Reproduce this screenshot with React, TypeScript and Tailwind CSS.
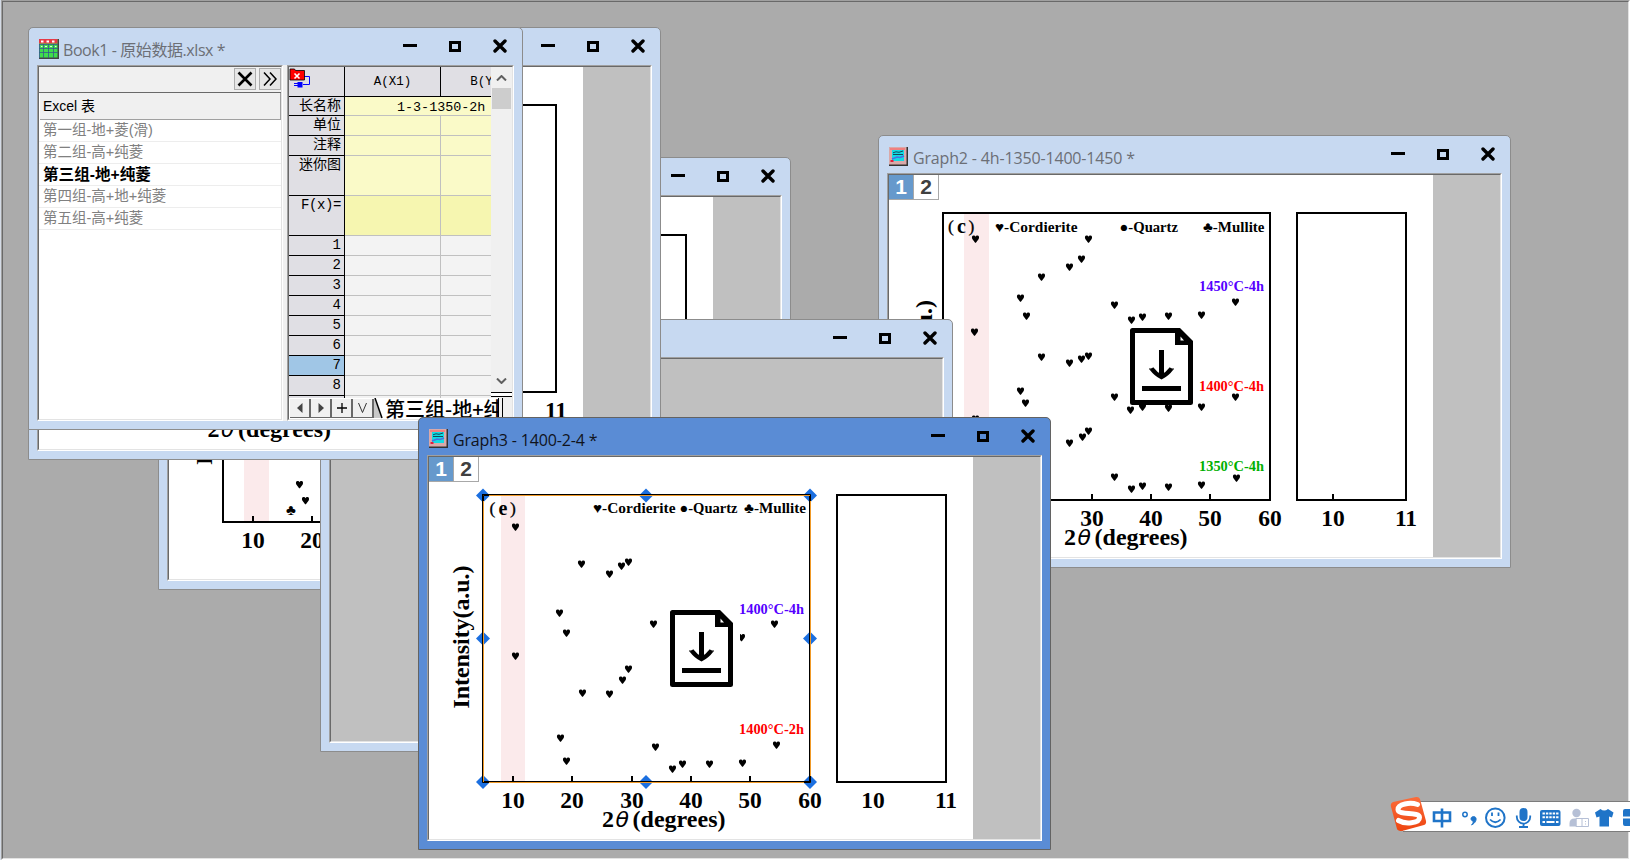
import React from "react";

type Point = [number, number];

type Label = {
  text: string;
  x: number;
  y: number;
  w: number;
  fill?: string;
};

const serif = '"Liberation Serif", "Noto Sans CJK SC", serif';

const sheets = [
  "第一组-地+菱(滑)",
  "第二组-高+纯菱",
  "第三组-地+纯菱",
  "第四组-高+地+纯菱",
  "第五组-高+纯菱",
];

const graph2Hearts: Point[] = [
  [86.5, 63.5], [199.5, 63.5], [192.5, 83.5], [180.5, 91.5], [152.5, 101.5],
  [131.5, 122.5], [137.5, 140.5], [225.5, 129.5], [242.5, 144.5], [253.5, 141.5],
  [279.5, 140.5], [312.5, 139.5], [346.5, 126.5], [85.5, 156.5], [152.5, 181.5],
  [180.5, 187.5], [192.5, 183.5], [199.5, 180.5], [131.5, 215.5], [136.5, 227.5],
  [86.5, 243.5], [225.5, 221.5], [241.5, 234.5], [253.5, 231.5], [279.5, 232.5],
  [312.5, 231.5], [346.5, 221.5], [180.5, 267.5], [193.5, 261.5], [199.5, 255.5],
  [225.5, 301.5], [242.5, 313.5], [253.5, 310.5], [279.5, 311.5], [312.5, 309.5],
  [347.5, 302.5],
];

const graph3Hearts: Point[] = [
  [86.5, 69.5], [152.5, 106.5], [180.5, 116.5], [192.5, 108.5], [199.5, 104.5],
  [130.5, 155.5], [137.5, 175.5], [224.5, 166.5], [345.5, 166.5], [312.5, 180],
  [86.5, 198.5], [199.5, 211.5], [193.5, 222.5], [153.5, 235.5], [180.5, 236.5],
  [131.5, 280.5], [137.5, 303.5], [226.5, 289.5], [243.5, 311.5], [253.5, 306.5],
  [280.5, 306.5], [313.5, 305.5], [347.5, 287.5],
];

const graph5Hearts: Point[] = [
  [130.5, 287], [136.5, 303],
];

const GraphIcon = () => (
  <svg width="19" height="19" viewBox="0 0 19 19">
    <rect width="19" height="19" fill="#333" />
    <rect x="0" y="0" width="17.5" height="17.5" fill="#d9a9a9" />
    <rect x="1" y="1" width="15" height="2" fill="#f08080" />
    <rect x="3" y="3" width="12" height="11" fill="#10dce4" />
    <path d="M4 5.800L7 4.800l3 .5 4-1.300M4 7.500h10" stroke="#14485a" fill="none" />
    <path d="M3 12l5-2 3 .5 4-1.500" stroke="#4a6fe0" strokeWidth="1.500" fill="none" />
    <path d="M1.500 14h3" stroke="#e02040" strokeWidth="2" />
  </svg>
);

const BookIcon = () => (
  <svg width="20" height="20" viewBox="0 0 20 20">
    <rect width="20" height="20" fill="#444" />
    <rect width="18.500" height="18.500" fill="#3fdc4c" />
    <rect width="18.500" height="4.500" fill="#e63946" />
    <path d="M2 2.500h2.500M7.500 2.500h2.500M13 2.500h2.500" stroke="#fff" strokeWidth="2" />
    <path
      d="M0 5.500h19M0 9.500h19M0 13.500h19M.5 5v14M4.500 5v14M9.500 5v14M14.500 5v14"
      stroke="#35588f"
      strokeWidth=".8"
    />
    <path d="M2 7.500h1.500M6 7.500h2M11 7.500h2M16 7.500h1.500" stroke="#d7ffe0" />
  </svg>
);

type WinProps = {
  className: string;
  title?: string;
  titleClass?: string;
  icon?: React.ReactNode;
  active?: boolean;
  children?: React.ReactNode;
};

const Win = ({ className, title, titleClass = "tracking-[-0.16px]", icon, active, children }: WinProps) => (
  <div
    className={`absolute flex flex-col overflow-hidden rounded-t-[5px] border px-2 pb-2 ${
      active ? "border-[#636363] bg-[#5a8cd5]" : "border-[#8c8c8c] bg-[#c7d9f1]"
    } ${className}`}
  >
    {/* Title bar */}
    <div className="flex h-[37px] shrink-0 items-start pr-[7px] pl-[2px]">
      <div className="mt-[11px] w-[24px]">{icon}</div>
      <div
        className={`mt-[10px] flex-1 whitespace-nowrap font-['Open_Sans','Noto_Sans_CJK_SC',sans-serif] text-[16px] leading-6 ${titleClass} ${
          active ? "text-[#10131c]" : "text-[#6c6f76]"
        }`}
      >
        {title}
      </div>
      <div className="mt-[11px] flex h-[14px] items-start gap-8">
        <div className="mt-[5px] h-[3px] w-[14px] bg-black"></div>
        <div className="mt-[2px] h-[11px] w-3 border-3 border-black"></div>
        <svg className="h-[14px] w-[14px]" viewBox="0 0 14 14">
          <path d="M2 2L12 12M12 2L2 12" stroke="#000" strokeWidth="3.400" strokeLinecap="round" />
        </svg>
      </div>
    </div>
    {children}
  </div>
);

// Two pixel sunken edge used round every window's client area
const Sunken = ({ className, children }: { className?: string; children?: React.ReactNode }) => (
  <div className="flex min-h-0 flex-1 border border-t-[#a0a0a0] border-r-white border-b-white border-l-[#a0a0a0]">
    <div
      className={`relative flex min-w-0 flex-1 overflow-hidden border border-t-[#696969] border-r-[#e3e3e3] border-b-[#e3e3e3] border-l-[#696969] ${className}`}
    >
      {children}
    </div>
  </div>
);

const LayerTabs = () => (
  <div className="absolute top-0 left-0 flex font-['Liberation_Sans',sans-serif] text-[21px] leading-[23px] font-bold">
    <div className="h-[25px] w-6 border-b border-[#a8a8a8] bg-[#6699cc] text-center text-white">1</div>
    <div className="h-[25px] w-[26px] border-r border-b border-l border-[#a8a8a8] bg-white text-center text-[#404040]">
      2
    </div>
  </div>
);

const Heart = ({ x, y }: { x: number; y: number }) => (
  <path
    transform={`translate(${x} ${y + 0.5})`}
    d="M-.4 3.800L-3.200 0C-4 -1.600 -3.400 -3.400 -2 -3.400C-1 -3.400 -.3 -2.900 0 -2.200C.3 -2.900 1 -3.400 2 -3.400C3.400 -3.400 4 -1.600 3.200 0L.4 3.800Z"
  />
);

const Download = () => (
  <g transform="translate(241 153)">
    <path d="M2.500 2.500H48L60.500 15V74.500H2.500Z" fill="#fff" stroke="#000" strokeWidth="5" strokeLinejoin="round" />
    <path d="M45 0h5l13 13v4H45z" />
    <path d="M50.500 8.500v4h3.500z" fill="#fff" />
    <path d="M29 22h5v26h-5z" />
    <path d="M21.500 40.500Q26 46.500 31.500 49Q37 46.500 41.500 40.500" fill="none" stroke="#000" strokeWidth="4.400" />
    <path d="M19 41h5M39 41h5" stroke="#000" strokeWidth="1.200" />
    <path d="M12 58h39v5H12z" />
  </g>
);

type PlotProps = {
  pink?: number;
  hearts?: Point[];
  legend?: Label[];
  labels?: Label[];
  tag?: { letter: string; x: number; y: number };
  axisX?: number;
  yAxis?: Point;
  rightTick?: boolean;
  download?: boolean;
  selected?: boolean;
  club?: boolean;
};

const ticks: Point[] = [
  [84, 10],
  [143, 20],
  [203, 30],
  [262, 40],
  [321, 50],
  [381, 60],
];

const Plot = (props: PlotProps) => {
  const { pink, hearts = [], legend = [], labels = [], tag, axisX, yAxis } = props;
  return (
    <svg className="h-[382px] w-[544px] shrink-0 bg-white" viewBox="0 0 544 382" fontFamily={serif} fontWeight="bold">
      {pink && <rect x={pink} y="39" width={props.selected ? 24 : 25} height="286" fill="#fbeaeb" />}
      <rect x="54" y="38" width="327" height="287" fill="none" stroke="#000" strokeWidth="2" />
      <rect x="408" y="38" width="109" height="287" fill="none" stroke="#000" strokeWidth="2" />

      {ticks.map(([x, value]) => (
        <g key={value}>
          {value < 60 && <rect x={x - 1} y="319" width="2" height="6" />}
          <text x={x} y="351" fontSize="23.500" textAnchor="middle">
            {value}
          </text>
        </g>
      ))}
      {props.rightTick && <rect x="443" y="319" width="2" height="6" />}
      <text x="444" y="351" fontSize="23.500" textAnchor="middle">10</text>
      <text x="517" y="351" fontSize="23.500" textAnchor="middle">11</text>

      {/* Axis titles */}
      {axisX && (
        <g fontSize="24">
          <text x={axisX} y="369.500">2</text>
          <text x={axisX + 13.500} y="369.500" fontFamily="DejaVu Sans, sans-serif" fontStyle="italic" fontWeight="normal" fontSize="22">
            θ
          </text>
          <text x={axisX + 30.500} y="369.500" textLength="93">(degrees)</text>
        </g>
      )}
      {yAxis && (
        <text transform={`translate(${yAxis[0]} ${yAxis[1]}) rotate(-90)`} fontSize="24" textLength="143">
          Intensity(a.u.)
        </text>
      )}

      {hearts.map(([x, y], i) => (
        <Heart key={i} x={x} y={y} />
      ))}
      {props.club && <text x="117" y="318" fontSize="15">♣</text>}

      {tag && (
        <g>
          <text x={tag.x} y={tag.y} fontSize="17.500" fontWeight="normal" stroke="#000" strokeWidth=".3">(</text>
          <text x={tag.x + 9} y={tag.y + 1} fontSize="20">{tag.letter}</text>
          <text x={tag.x + 20.500} y={tag.y} fontSize="17.500" fontWeight="normal" stroke="#000" strokeWidth=".3">)</text>
        </g>
      )}
      {legend.concat(labels).map((l) => (
        <text key={l.text} x={l.x} y={l.y} fontSize="14.500" textLength={l.w} lengthAdjust="spacingAndGlyphs" fill={l.fill}>
          {l.text}
        </text>
      ))}

      {props.download && (
        <g>
          <rect x="303" y="170" width="8" height="20" fill="#fff" />
          <Download />
        </g>
      )}

      {/* Selection frame with its eight grips */}
      {props.selected && (
        <g>
          {[38.5, 181.5, 325].map((y) =>
            [54, 217, 381].map((x) =>
              x === 217 && y === 181.5 ? null : (
                <path key={`${x}-${y}`} d={`M${x - 7} ${y}l7-7 7 7-7 7z`} fill="#1b6fe0" />
              )
            )
          )}
          <rect x="53.5" y="37.5" width="327" height="287" fill="none" stroke="#000" />
          <rect x="54.5" y="38.5" width="327" height="287" fill="none" stroke="#f09a28" />
          <path d="M54.500 44V38.500H60M375 37.500H381.500V44M53.500 319V325.500H60M375 325.500H381.500V319" fill="none" stroke="#000" />
        </g>
      )}
    </svg>
  );
};

const gridRows = [
  { name: "长名称", row: "h-[19px]", cell: "bg-[#fafac8]" },
  { name: "单位", row: "h-5", cell: "bg-[#fafac8]" },
  { name: "注释", row: "h-5", cell: "bg-[#fafac8]" },
  { name: "迷你图", row: "h-10", cell: "bg-[#fafac8]" },
  { name: "F(x)=", row: "h-10", cell: "bg-[#f6f6b0]" },
  { name: "1", row: "h-5", cell: "bg-[#f3f3f3]" },
  { name: "2", row: "h-5", cell: "bg-[#f3f3f3]" },
  { name: "3", row: "h-5", cell: "bg-[#f3f3f3]" },
  { name: "4", row: "h-5", cell: "bg-[#f3f3f3]" },
  { name: "5", row: "h-5", cell: "bg-[#f3f3f3]" },
  { name: "6", row: "h-5", cell: "bg-[#f3f3f3]" },
  { name: "7", row: "h-5", cell: "bg-[#f3f3f3]" },
  { name: "8", row: "h-5", cell: "bg-[#f3f3f3]" },
  { name: "", row: "h-5", cell: "bg-[#f3f3f3]" },
];

const SheetList = () => (
  <div className="flex w-[246px] shrink-0">
    <Sunken className="flex-col bg-white">
      <div className="flex h-[26px] shrink-0 items-start justify-end gap-[3px] border-b border-[#696969] bg-[#f0f0f0] pt-px">
        <div className="flex size-[22px] items-center justify-center border border-[#adadad] bg-[#e6e6e6]">
          <svg width="16" height="16" viewBox="0 0 16 16">
            <path d="M1.500 1.500L14.500 14.500M14.500 1.500L1.500 14.500" stroke="#000" strokeWidth="2.600" />
          </svg>
        </div>
        <div className="flex size-[22px] items-center justify-center border border-[#adadad] bg-[#e6e6e6]">
          <svg width="14" height="14" viewBox="0 0 14 14">
            <path d="M1 .5L7 7L1 13.500M7 .5L13 7L7 13.500" fill="none" stroke="#000" strokeWidth="1.500" />
          </svg>
        </div>
      </div>
      <div className="ml-px flex h-[27px] shrink-0 items-center border-r border-b border-[#a0a0a0] bg-[#f0f0f0] pl-[3px] font-['Liberation_Sans','Noto_Sans_CJK_SC',sans-serif] text-[14px] text-black">
        Excel 表
      </div>
      {sheets.map((sheet, i) => (
        <div
          key={sheet}
          className={`h-[22px] shrink-0 border-b border-[#ededed] pl-1 font-['Liberation_Sans','Noto_Sans_CJK_SC',sans-serif] leading-[21px] whitespace-nowrap ${
            i === 2 ? "text-[15.6px] font-bold text-black" : "text-[14.5px] text-[#808080]"
          }`}
        >
          {sheet}
        </div>
      ))}
    </Sunken>
  </div>
);

const TabButton = ({ children }: { children: React.ReactNode }) => (
  <div className="flex h-[19px] w-[21px] items-center justify-center border-r-2 border-b border-[#696969] bg-[#f0f0f0]">
    {children}
  </div>
);

const Worksheet = () => (
  <div className="flex min-w-0 flex-1">
    <Sunken className="flex-col bg-[#f0f0f0]">
      <div className="flex h-[331px] shrink-0 overflow-hidden">
        <div className="w-[202px] shrink-0 overflow-hidden font-['Liberation_Mono','Noto_Sans_CJK_SC',monospace] text-black">
          {/* Column headings */}
          <div className="flex h-[30px] w-[260px] border-b border-black bg-[#e0dfe4] text-[12.5px] leading-[31px]">
            <div className="w-[56px] shrink-0 border-r border-black">
              <svg width="22" height="22" viewBox="0 0 22 22">
                <path d="M15 9.500h5.500v8H14" stroke="#00f" fill="none" />
                <path d="M5 16.500h4M5 18.500h4" stroke="#00f" fill="none" />
                <path d="M8.500 15h5v5.500h-5z" fill="#00f" />
                <path d="M1 2h4.500l1 1.500h9V13H1z" fill="#f00" stroke="#000" strokeWidth=".8" />
                <path d="M5.500 6.500l5 5M10.500 6.500l-5 5" stroke="#fff" strokeWidth="1.600" />
              </svg>
            </div>
            <div className="w-[96px] shrink-0 border-r border-black text-center">A(X1)</div>
            <div className="w-[96px] shrink-0 text-center">B(Y1)</div>
          </div>
          {gridRows.map((r) => (
            <div key={r.name} className={`flex w-[260px] ${r.row}`}>
              <div
                className={`w-[56px] shrink-0 border-r border-b border-black pr-[3px] text-right text-[14px] leading-[18px] ${
                  r.name === "7" ? "bg-[#a0c6e6]" : "bg-[#e0dfe4]"
                }`}
              >
                <span className={r.name === "F(x)=" ? "tracking-[-0.4px]" : ""}>{r.name}</span>
              </div>
              {r.name === "长名称" ? (
                <div className={`w-[192px] shrink-0 border-b border-[#c0c0c0] pl-[52px] text-[13.4px] leading-[21px] ${r.cell}`}>
                  1-3-1350-2h
                </div>
              ) : (
                <>
                  <div className={`w-[96px] shrink-0 border-r border-b border-[#c0c0c0] ${r.cell}`}></div>
                  <div className={`w-[96px] shrink-0 border-b border-[#c0c0c0] ${r.cell}`}></div>
                </>
              )}
            </div>
          ))}
        </div>
        {/* Scroll bar */}
        <div className="flex flex-1 flex-col bg-[#f0f0f0]">
          <div className="flex h-[326px] flex-col items-center border-b border-black">
            <svg className="mt-[8px] mb-[7px]" width="11" height="6" viewBox="0 0 11 6">
              <path d="M1 5.500L5.500 1L10 5.500" fill="none" stroke="#606060" strokeWidth="2" />
            </svg>
            <div className="h-[21px] w-[19px] bg-[#cdcdcd]"></div>
            <div className="flex-1"></div>
            <svg className="mb-[8px]" width="11" height="6" viewBox="0 0 11 6">
              <path d="M1 .5L5.500 5L10 .5" fill="none" stroke="#606060" strokeWidth="2" />
            </svg>
          </div>
          <div className="h-1 border-b border-black bg-white"></div>
        </div>
      </div>
      {/* Sheet tabs */}
      <div className="flex h-[21px] shrink-0 bg-white">
        <div className="flex shrink-0 items-end bg-white pb-px pl-px">
          <TabButton>
            <svg width="6" height="10" viewBox="0 0 6 10"><path d="M5.500 0v10L0 5z" fill="#444" /></svg>
          </TabButton>
          <TabButton>
            <svg width="6" height="10" viewBox="0 0 6 10"><path d="M.5 0v10L6 5z" fill="#444" /></svg>
          </TabButton>
          <TabButton>
            <svg width="10" height="10" viewBox="0 0 10 10"><path d="M5 0v10M0 5h10" stroke="#000" strokeWidth="1.300" /></svg>
          </TabButton>
          <TabButton>
            <svg width="9" height="10" viewBox="0 0 9 10"><path d="M.5 0L4.500 9.500L8.500 0" fill="none" stroke="#333" /></svg>
          </TabButton>
        </div>
        <svg className="shrink-0" width="9" height="21" viewBox="0 0 9 21">
          <path d="M0 0L8 20H0z" fill="#c8c8c8" />
          <path d="M1 0L8 20" stroke="#000" strokeWidth="1.500" />
        </svg>
        <div className="w-[116px] shrink-0 overflow-hidden border-r border-black pl-[2px] font-['Noto_Sans_CJK_SC',sans-serif] text-[20px] leading-[21px] font-medium whitespace-nowrap text-black">
          第三组-地+纯
        </div>
        <div className="w-1 shrink-0 border-r border-black bg-[#f0f0f0]"></div>
        <div className="flex-1 bg-[#f0f0f0]"></div>
      </div>
    </Sunken>
  </div>
);

const GrayPad = () => <div className="flex-1 bg-[#c0c0c0]"></div>;

const ImeBar = () => (
  <div className="absolute top-[801px] left-[1403px] flex h-[31px] w-[227px] items-center overflow-visible border-y border-[#7c7c7c] bg-white">
    <svg className="-mt-[5px] -ml-[13px] shrink-0" width="37" height="36" viewBox="0 0 37 36">
      <defs>
        <linearGradient id="sogou" x1="0" y1="0" x2="0" y2="1">
          <stop offset="0" stopColor="#fb6d3c" />
          <stop offset="1" stopColor="#ee4510" />
        </linearGradient>
      </defs>
      <path d="M3 6L26 1Q29 .5 30 3L36 25Q36.500 28 34 29L12 35Q8 35 7 33L.8 10Q.5 7 3 6Z" fill="url(#sogou)" />
      <path
        d="M27.500 8.500C20 6 8 8 8 13.500C8 20 29.500 15 29.500 21.500C29.500 27.500 15 28.500 8.500 24.500"
        fill="none"
        stroke="#fff"
        strokeWidth="5"
        strokeLinecap="round"
      />
    </svg>
    <svg className="shrink-0" width="203" height="29" viewBox="1427 802 203 29" fill="none" stroke="#1f74c8">
      {/* Chinese mode */}
      <path d="M1434 812.500h16v8.500h-16zM1442 808.500v19" strokeWidth="2.600" />
      {/* Punctuation */}
      <circle cx="1465" cy="814.500" r="2.200" strokeWidth="1.500" />
      <path d="M1473.500 816.500c4 0 3.500 6-2 8.500c1.500-1.500 2-3 1.500-4c-3-.5-2.500-4.500.5-4.500z" fill="#1f74c8" strokeWidth=".9" />
      {/* Emoji */}
      <circle cx="1495.300" cy="817.700" r="9.300" strokeWidth="2" />
      <path d="M1492 812.500v3.500M1498.500 812.500v3.500M1490 819.500q5.300 5.500 10.600 0" strokeWidth="1.800" />
      {/* Voice */}
      <rect x="1519.500" y="808" width="8" height="13" rx="4" fill="#1f74c8" stroke="none" />
      <path d="M1516.800 815.500v1.500a6.700 6.700 0 0 0 13.400 0v-1.500M1523.500 823.500v3.500M1519 827h9" strokeWidth="1.800" />
      {/* Keyboard */}
      <rect x="1540" y="810" width="20.500" height="16" rx="2" fill="#1f74c8" stroke="none" />
      <path d="M1542.500 813.500h16M1542.500 817.200h16" stroke="#fff" strokeWidth="2" strokeDasharray="2.400 1" />
      <path d="M1542.500 822h2.500M1546.500 822h8M1556 822h2.500" stroke="#fff" strokeWidth="2" />
      {/* Account */}
      <circle cx="1576.500" cy="813" r="4.200" fill="#b6c0d6" stroke="none" />
      <path d="M1569.500 826.500v-3q0-5 5-5h2v8z" fill="#b6c0d6" stroke="none" />
      <path d="M1576 818.500h12.500v8H1576zM1582 818.500v8M1585.500 821v1M1585.500 823.500v1" stroke="#b6c0d6" />
      {/* Skin */}
      <path
        d="M1600.500 809q3.700 3 7.500 0l5.500 3.500-1.500 5-3-1v10h-9.500v-10l-3 1-1.500-5z"
        fill="#1f74c8"
        stroke="none"
      />
      {/* Toolbox */}
      <path d="M1625 809h5v7.500h-7V811q0-2 2-2zM1623 818.500h7v7.500h-5q-2 0-2-2z" fill="#1f74c8" stroke="none" />
    </svg>
  </div>
);

const App = () => {
  return (
    <div className="relative h-[860px] w-[1630px] overflow-hidden border-l border-[#d4dbe6]">
      <div className="flex h-full w-full">
        <Sunken className="bg-[#ababab]" />
      </div>

      {/* MDI child windows, back to front, placed on the desktop */}
      <div className="absolute top-0 -left-px h-[860px] w-[1630px]">
        <Win className="top-[157px] left-[158px] h-[433px] w-[633px]">
          <Sunken>
            <Plot pink={75} hearts={graph5Hearts} yAxis={[43, 268]} club />
            <GrayPad />
          </Sunken>
        </Win>

        <Win
          className="top-[135px] left-[878px] h-[433px] w-[633px]"
          title="Graph2 - 4h-1350-1400-1450 *"
          icon={<GraphIcon />}
        >
          <Sunken>
            <Plot
              pink={75}
              hearts={graph2Hearts}
              tag={{ letter: "c", x: 59, y: 56.5 }}
              legend={[
                { text: "♥-Cordierite", x: 106, y: 57, w: 82.5 },
                { text: "●-Quartz", x: 230.5, y: 57, w: 58.5 },
                { text: "♣-Mullite", x: 314, y: 57, w: 61.5 },
              ]}
              labels={[
                { text: "1450°C-4h", x: 310, y: 116, w: 65, fill: "#5500ff" },
                { text: "1400°C-4h", x: 310, y: 216, w: 65, fill: "#ff0000" },
                { text: "1350°C-4h", x: 310, y: 296, w: 65, fill: "#00b000" },
              ]}
              axisX={175}
              yAxis={[43, 268]}
              rightTick
              download
            />
            <GrayPad />
            <LayerTabs />
          </Sunken>
        </Win>

        <Win className="top-[319px] left-[320px] h-[433px] w-[633px]">
          <Sunken className="bg-[#c0c0c0]" />
        </Win>

        <Win className="top-[27px] left-[28px] h-[433px] w-[633px]">
          <Sunken>
            <Plot axisX={168.5} />
            <GrayPad />
          </Sunken>
        </Win>

        <Win
          className="top-[27px] left-[28px] h-[403px] w-[495px]"
          title="Book1 - 原始数据.xlsx *"
          titleClass="tracking-[-0.42px]"
          icon={<BookIcon />}
        >
          <div className="flex min-h-0 flex-1 gap-1 bg-[#f0f0f0]">
            <SheetList />
            <Worksheet />
          </div>
        </Win>

        <Win
          className="top-[417px] left-[418px] h-[433px] w-[633px]"
          title="Graph3 - 1400-2-4 *"
          icon={<GraphIcon />}
          active
        >
          <Sunken>
            <Plot
              pink={72}
              hearts={graph3Hearts}
              tag={{ letter: "e", x: 60.5, y: 57 }}
              legend={[
                { text: "♥-Cordierite", x: 164, y: 56, w: 82.5 },
                { text: "●-Quartz", x: 250.5, y: 56, w: 58 },
                { text: "♣-Mullite", x: 315, y: 56, w: 62 },
              ]}
              labels={[
                { text: "1400°C-4h", x: 310, y: 157, w: 65, fill: "#5500ff" },
                { text: "1400°C-2h", x: 310, y: 276.5, w: 65, fill: "#ff0000" },
              ]}
              axisX={173}
              yAxis={[40, 251.5]}
              download
              selected
            />
            <GrayPad />
            <LayerTabs />
          </Sunken>
        </Win>

        <ImeBar />
      </div>
    </div>
  );
};

export default App;
